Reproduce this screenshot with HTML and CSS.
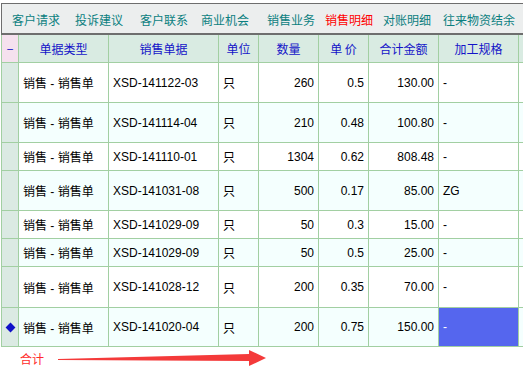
FILE: index.html
```html
<!DOCTYPE html>
<html lang="zh-CN">
<head>
    <meta charset="UTF-8">
    <title>销售明细</title>
    <link rel="stylesheet" href="styles.css">
</head>
<body>
    <div class="tab-bar">
        <span class="tab">客户请求</span>
        <span class="tab">投诉建议</span>
        <span class="tab">客户联系</span>
        <span class="tab">商业机会</span>
        <span class="tab">销售业务</span>
        <span class="tab active">销售明细</span>
        <span class="tab">对账明细</span>
        <span class="tab">往来物资结余</span>
    </div>
    <table class="grid">
        <thead>
            <tr>
                <th class="ind collapse">−</th>
                <th class="c-type">单据类型</th>
                <th class="c-no">销售单据</th>
                <th class="c-unit">单位</th>
                <th class="c-qty">数量</th>
                <th class="c-price">单 价</th>
                <th class="c-sum">合计金额</th>
                <th class="c-spec">加工规格</th>
                <th class="c-more"></th>
            </tr>
        </thead>
        <tbody>
            <tr class="tall">
                <td class="ind"></td><td>销售 - 销售单</td><td>XSD-141122-03</td><td>只</td>
                <td class="num">260</td><td class="num">0.5</td><td class="num">130.00</td><td>-</td><td></td>
            </tr>
            <tr class="tall alt">
                <td class="ind"></td><td>销售 - 销售单</td><td>XSD-141114-04</td><td>只</td>
                <td class="num">210</td><td class="num">0.48</td><td class="num">100.80</td><td>-</td><td></td>
            </tr>
            <tr class="short">
                <td class="ind"></td><td>销售 - 销售单</td><td>XSD-141110-01</td><td>只</td>
                <td class="num">1304</td><td class="num">0.62</td><td class="num">808.48</td><td>-</td><td></td>
            </tr>
            <tr class="tall alt">
                <td class="ind"></td><td>销售 - 销售单</td><td>XSD-141031-08</td><td>只</td>
                <td class="num">500</td><td class="num">0.17</td><td class="num">85.00</td><td>ZG</td><td></td>
            </tr>
            <tr class="short">
                <td class="ind"></td><td>销售 - 销售单</td><td>XSD-141029-09</td><td>只</td>
                <td class="num">50</td><td class="num">0.3</td><td class="num">15.00</td><td>-</td><td></td>
            </tr>
            <tr class="short alt">
                <td class="ind"></td><td>销售 - 销售单</td><td>XSD-141029-09</td><td>只</td>
                <td class="num">50</td><td class="num">0.5</td><td class="num">25.00</td><td>-</td><td></td>
            </tr>
            <tr class="tall-plus">
                <td class="ind"></td><td>销售 - 销售单</td><td>XSD-141028-12</td><td>只</td>
                <td class="num">200</td><td class="num">0.35</td><td class="num">70.00</td><td>-</td><td></td>
            </tr>
            <tr class="tall-minus alt">
                <td class="ind"><span class="marker"></span></td><td>销售 - 销售单</td><td>XSD-141020-04</td><td>只</td>
                <td class="num">200</td><td class="num">0.75</td><td class="num">150.00</td><td class="selected">-</td><td></td>
            </tr>
        </tbody>
    </table>
    <div class="total-row">
        <span class="total-label">合计</span>
        <svg class="arrow" width="212" height="20" viewBox="0 0 212 20">
            <polygon points="0,11 191,6 191,2 208,10 191,18 191,13 0,12" fill="#f43a3a"/>
        </svg>
    </div>
</body>
</html>
```

FILE: styles.css
```css
body {
    margin: 0;
    background-color: #ffffff;
    font-family: "Liberation Sans", "Noto Sans CJK SC", sans-serif;
    font-size: 12px;
    overflow: hidden;
}
.tab-bar {
    display: flex;
    align-items: center;
    height: 27px;
    margin: 3px 0 0 1px;
    padding: 2px 0 0 10px;
    background-color: #eceeee;
    border-top: 1px solid #6e6e6e;
    border-left: 1px solid #6e6e6e;
    border-bottom: 2px solid #6e6e6e;
    overflow: hidden;
}
.tab {
    flex-shrink: 0;
    color: #0b7f7f;
    font-family: "Noto Sans CJK SC", sans-serif;
    font-size: 12px;
    white-space: nowrap;
}
.tab:nth-child(1) { width: 63px; }
.tab:nth-child(2) { width: 65px; }
.tab:nth-child(3) { width: 61px; }
.tab:nth-child(4) { width: 66px; }
.tab:nth-child(5) { width: 58px; }
.tab:nth-child(6) { width: 58px; }
.tab:nth-child(7) { width: 60px; }
.tab.active {
    color: #ff0000;
}

.grid {
    margin-left: 1px;
    border-collapse: separate;
    border-spacing: 0;
    table-layout: fixed;
    width: 522px;
    border-left: 1px solid #a2cfa2;
}
.grid th, .grid td {
    box-sizing: border-box;
    border-right: 1px solid #a2cfa2;
    border-bottom: 1px solid #a2cfa2;
    padding: 0 4px;
    white-space: nowrap;
    overflow: hidden;
    vertical-align: middle;
}
.grid th {
    height: 28px;
    background-color: #d9ebe2;
    color: #1414c8;
    font-family: "Noto Sans CJK SC", sans-serif;
    font-weight: normal;
    font-size: 12px;
    text-align: center;
}
.grid th.collapse {
    background-color: #f5e1ee;
    color: #1414c8;
    padding: 0;
}
.grid .ind { width: 17px; padding: 0; text-align: center; }
.c-type { width: 90px; }
.c-no { width: 110px; }
.c-unit { width: 40px; }
.c-qty { width: 60px; }
.c-price { width: 50px; }
.c-sum { width: 70px; }
.c-spec { width: 80px; }
.grid .c-more { width: 4px; padding: 0; }
.grid td:last-child { padding: 0; border-right: none; }
.grid th:last-child { border-right: none; }

.grid td {
    color: #000000;
    background-color: #ffffff;
}
.grid tr.alt td {
    background-color: #f4fffe;
}
.grid td.ind, .grid tr.alt td.ind {
    background-color: #dbeae3;
}
.grid td.num {
    text-align: right;
}
.grid td.selected, .grid tr.alt td.selected {
    background-color: #5566ee;
    color: #ffffff;
}
.tall td { height: 40px; }
.short td { height: 28px; }
.tall-plus td { height: 41px; }
.tall-minus td { height: 39px; }

.marker {
    display: inline-block;
    width: 7px;
    height: 7px;
    background-color: #1010c8;
    transform: rotate(45deg);
    margin-top: 2px;
}

.total-row {
    display: flex;
    align-items: center;
    height: 22px;
}
.total-label {
    margin-left: 20px;
    color: #ff2a2a;
    font-family: "Noto Sans CJK SC", sans-serif;
    font-size: 12px;
}
.arrow {
    margin-left: 14px;
}
```
